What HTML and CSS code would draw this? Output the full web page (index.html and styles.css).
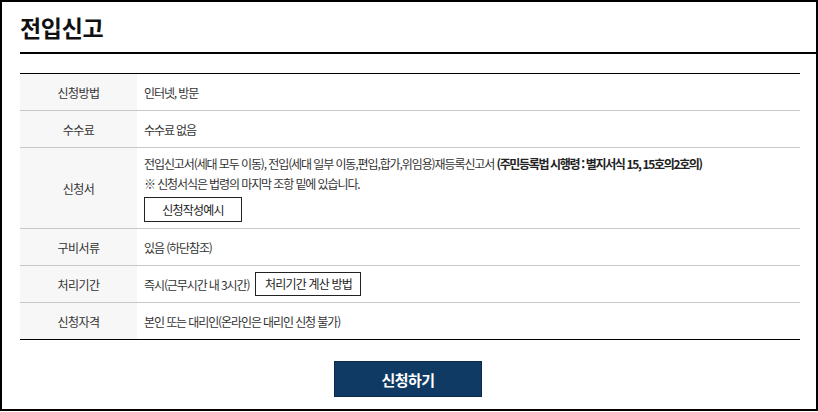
FILE: index.html
```html
<!DOCTYPE html>
<html lang="ko">
<head>
<meta charset="utf-8">
<link rel="stylesheet" href="styles.css">
</head>
<body>
<div class="page">
  <h1 class="title">전입신고</h1>
  <div class="rule"></div>
  <table class="info">
    <tr>
      <th>신청방법</th>
      <td>인터넷, 방문</td>
    </tr>
    <tr>
      <th>수수료</th>
      <td>수수료 없음</td>
    </tr>
    <tr class="tall">
      <th>신청서</th>
      <td>
        <div class="line">전입신고서(세대 모두 이동), 전입(세대 일부 이동,편입,합가,위임용)재등록신고서 <b>(주민등록법 시행령 : 별지서식 15, 15호의2호의)</b></div>
        <div class="line">※ 신청서식은 법령의 마지막 조항 밑에 있습니다.</div>
        <span class="btn btn-sample">신청작성예시</span>
      </td>
    </tr>
    <tr>
      <th>구비서류</th>
      <td>있음 (하단참조)</td>
    </tr>
    <tr>
      <th>처리기간</th>
      <td><span class="inline">즉시(근무시간 내 3시간)</span><span class="btn btn-calc">처리기간 계산 방법</span></td>
    </tr>
    <tr>
      <th>신청자격</th>
      <td>본인 또는 대리인(온라인은 대리인 신청 불가)</td>
    </tr>
  </table>
  <div class="actions">
    <span class="apply">신청하기</span>
  </div>
</div>
</body>
</html>
```

FILE: styles.css
```css
* { box-sizing: border-box; }
html, body { margin: 0; padding: 0; background: #fff; }
body {
  font-family: "Noto Sans CJK KR", "Noto Sans", sans-serif;
  color: #333;
}
.page {
  width: 818px;
  height: 411px;
  border: 2px solid #000;
  padding: 0 0 0 18px;
  overflow: hidden;
}
.title {
  margin: 0;
  height: 50px;
  padding-top: 10px;
  font-size: 23px;
  line-height: 30px;
  font-weight: 700;
  color: #111;
  letter-spacing: -0.3px;
}
.rule {
  height: 2px;
  background: #000;
}
.info {
  margin-top: 19px;
  width: calc(100% - 16px);
  border-collapse: collapse;
  border-top: 1px solid #000;
  border-bottom: 1px solid #000;
  font-size: 12px;
  letter-spacing: -0.6px;
}
.info th, .info td {
  border-bottom: 1px solid #c8c8c8;
  height: 37px;
  padding: 0;
  vertical-align: middle;
}
.info tr:last-child th, .info tr:last-child td { border-bottom: 0; }
.info th {
  width: 117px;
  background: #f7f7f7;
  font-weight: 400;
  color: #333;
  text-align: center;
}
.info td {
  padding-left: 7px;
  color: #333;
  letter-spacing: -1.1px;
}
.info td b { font-weight: 700; color: #222; letter-spacing: -1.35px; }
.info tr.tall td { height: 81px; padding-top: 5px; padding-bottom: 6px; }
.line { line-height: 20px; }
.btn {
  display: inline-block;
  border: 1px solid #222;
  background: #fff;
  height: 25px;
  line-height: 23px;
  text-align: center;
  color: #222;
  letter-spacing: -0.8px;
}
.btn-sample { width: 98px; margin-top: 3px; }
.btn-calc { width: 106px; height: 24px; line-height: 22px; margin-left: 6px; }
.inline { vertical-align: middle; }
.btn-calc { vertical-align: middle; }
.actions {
  display: flex;
  justify-content: center;
  padding-top: 21px;
  padding-right: 20px;
}
.apply {
  display: inline-block;
  width: 148px;
  height: 36px;
  line-height: 36px;
  background: #0f3a64;
  border: 1px solid #0a2a4a;
  color: #fff;
  font-weight: 700;
  font-size: 15px;
  text-align: center;
  letter-spacing: -0.6px;
}
```
